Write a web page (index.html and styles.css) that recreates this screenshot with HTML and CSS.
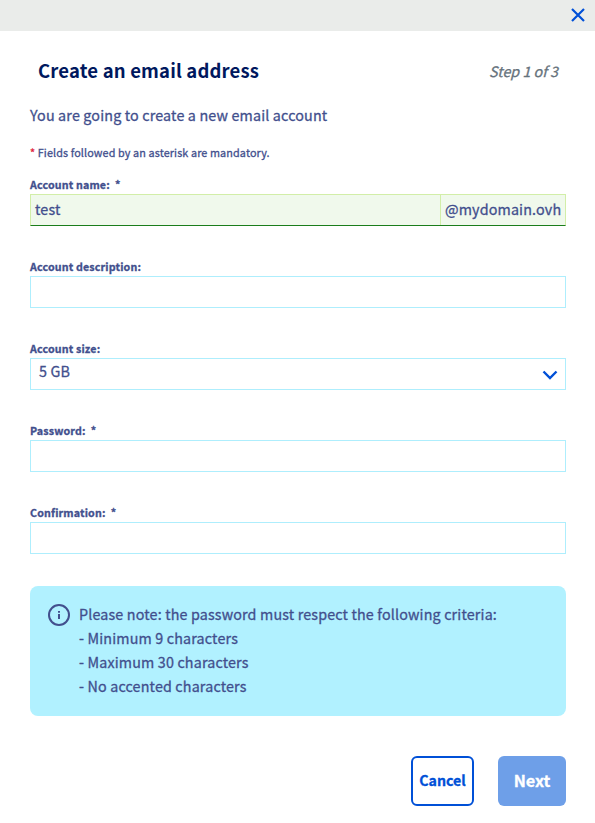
FILE: index.html
```html
<!DOCTYPE html>
<html lang="en">
<head>
<meta charset="utf-8">
<title>Create an email address</title>
<link rel="stylesheet" href="styles.css">
</head>
<body>
<header class="topbar">
  <button class="close" aria-label="Close"><svg width="14" height="14" viewBox="0 0 14 14"><path d="M1 1l12 12M13 1L1 13"/></svg></button>
</header>
<main class="dialog">
  <div class="heading">
    <h1>Create an email address</h1>
    <span class="step">Step 1 of 3</span>
  </div>
  <p class="intro">You are going to create a new email account</p>
  <p class="mandatory"><b>*</b> Fields followed by an asterisk are mandatory.</p>
  <form>
    <div class="field">
      <label>Account name: &nbsp;*</label>
      <div class="control valid"><span class="value">test</span><span class="domain">@mydomain.ovh</span></div>
    </div>
    <div class="field">
      <label>Account description:</label>
      <div class="control"></div>
    </div>
    <div class="field">
      <label>Account size:</label>
      <div class="control select"><span class="size">5 GB</span><svg width="16" height="10" viewBox="0 0 16 10"><path d="M1.500 1.500L8 8l6.500-6.500"/></svg></div>
    </div>
    <div class="field">
      <label>Password: &nbsp;*</label>
      <div class="control"></div>
    </div>
    <div class="field">
      <label>Confirmation: &nbsp;*</label>
      <div class="control"></div>
    </div>
  </form>
  <section class="note">
    <svg width="22" height="22" viewBox="0 0 22 22"><circle cx="11" cy="11" r="10"/><path d="M11 10v5M11 7v1.700"/></svg>
    <div class="lines">
      <div>Please note: the password must respect the following criteria:</div>
      <div>- Minimum 9 characters</div>
      <div>- Maximum 30 characters</div>
      <div>- No accented characters</div>
    </div>
  </section>
  <footer class="actions">
    <button class="btn cancel">Cancel</button>
    <button class="btn next">Next</button>
  </footer>
</main>
</body>
</html>
```
FILE: styles.css
```css
* { box-sizing: border-box; }
body { margin: 0; background: #fff; color: #424f8d; font-family: "Noto Sans CJK SC", sans-serif; font-size: 14.3px; letter-spacing: 0.16px; height: 823px; overflow: hidden; -webkit-text-stroke: 0.3px currentColor; }
button { font-family: inherit; }
svg { fill: none; display: block; flex: none; }
.topbar { height: 31px; background: #eaecea; display: flex; justify-content: flex-end; padding: 8px 10px 0 0; }
.close { border: 0; padding: 0; background: none; width: 14px; height: 14px; }
.close svg { stroke: #0050d7; stroke-width: 2.2; }
.dialog { padding: 27px 29px 0 30px; }
.heading { display: flex; justify-content: space-between; align-items: center; height: 24px; padding: 0 8px; }
h1 { margin: 0; font-size: 18.500px; letter-spacing: 0.17px; line-height: 24px; color: #00185e; font-weight: 700; white-space: nowrap; -webkit-text-stroke: 0; }
.step { font-style: italic; color: #66727c; line-height: 24px; padding-top: 2px; letter-spacing: 0; }
p { margin: 0; white-space: nowrap; }
.intro { margin-top: 21px; line-height: 24px; }
.mandatory { margin-top: 17px; font-size: 10.800px; letter-spacing: 0.12px; line-height: 16px; }
.mandatory b { color: #e0203c; font-weight: 400; }
.field { height: 82px; }
form { margin-top: 16px; height: 410px; }
label { display: block; font-size: 10.700px; letter-spacing: 0.15px; line-height: 16px; font-weight: 700; height: 18px; padding-top: 1px; white-space: nowrap; }
.control { height: 32px; border: 1px solid #aeeefd; display: flex; line-height: 28px; }
.valid { background: #f0f9ec; border-color: #d2eea8; border-bottom-color: #1b7d1b; }
.value { flex: 1; padding-left: 4px; }
.domain { width: 125px; border-left: 1px solid #d2eea8; padding-left: 4px; white-space: nowrap; }
.select { justify-content: space-between; padding: 0 7px 0 8px; line-height: 24px; }
.select svg { stroke: #0050d7; stroke-width: 2.4; margin-top: 11px; }
.note { height: 130px; border-radius: 8px; background: #b1f1ff; padding: 16px 18px; display: flex; gap: 9px; }
.note svg { stroke: #424f8d; stroke-width: 2; margin-top: 2px; }
.lines { line-height: 24px; white-space: nowrap; }
.actions { display: flex; justify-content: flex-end; gap: 24px; margin-top: 40px; }
.btn { height: 50px; border-radius: 6px; font-weight: 700; padding: 0 0 3px; }
.cancel { width: 63px; background: #fff; border: 2px solid #0050d7; color: #0050d7; font-size: 14.200px; }
.next { width: 68px; background: #6e9fe8; border: 0; color: #fff; font-size: 16.200px; }
```
